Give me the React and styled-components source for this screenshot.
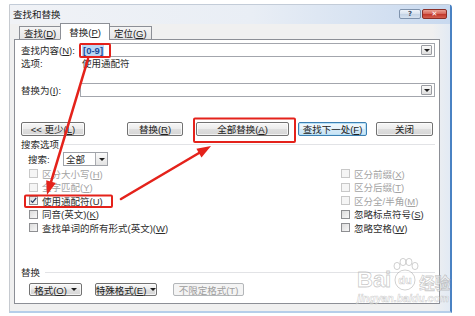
import React from 'react';
import styled, { createGlobalStyle, css } from 'styled-components';

const Global = createGlobalStyle`
  html, body { margin: 0; padding: 0; background: #fff; }
  body { font-family: "Liberation Sans", "Noto Sans CJK SC", sans-serif; font-size: 9.5px; color: #2a2a2a; }
  #root { width: 475px; height: 316px; overflow: hidden; }
  * { box-sizing: border-box; }
`;

const Page = styled.div`
  position: relative;
  display: flex;
  align-items: flex-start;
  width: 475px;
  height: 316px;
  padding-left: 9px;
`;

const Window = styled.div`
  margin-top: 4px;
  width: 443px;
  height: 309px;
  display: flex;
  flex-direction: column;
  border-left: 1px solid #c6cad0;
  border-top: 1px solid #c3ccd8;
  border-right: 2px solid #4a82c3;
  border-bottom: 2px solid #b6cee9;
  border-top-right-radius: 4px;
  background: linear-gradient(to right, #f0f0f0 0%, #f0f0f0 96%, #e2eaf4 100%);
`;

const TitleBar = styled.div`
  height: 19px;
  display: flex;
  align-items: flex-start;
  justify-content: space-between;
  padding: 0 3px 0 3px;
  background: linear-gradient(to right, rgba(240,242,246,1) 0%, rgba(233,238,245,1) 55%, rgba(200,217,239,1) 100%);
`;

const Title = styled.div`
  line-height: 19px;
  font-size: 9.5px;
  color: #1b1b1b;
`;

const Caption = styled.div`
  display: flex;
  gap: 1px;
  padding-top: 4px;
`;

const CapBtn = styled.div`
  height: 10px;
  width: ${p => p.$w}px;
  border-radius: 2px;
  display: flex;
  align-items: center;
  justify-content: center;
  font-size: 7px;
  line-height: 1;
  font-family: "DejaVu Sans", sans-serif;
  font-weight: bold;
  ${p => p.$close ? css`
    border: 1px solid #8a2e26;
    background: linear-gradient(#e9a093 0%, #d8685b 45%, #c2392c 55%, #d4604f 100%);
    color: #fff;
  ` : css`
    border: 1px solid #7f93ad;
    background: linear-gradient(#eef3f9 0%, #d9e3ef 45%, #c4d3e5 55%, #d6e1ee 100%);
    color: #3d4f68;
  `}
`;

const Body = styled.div`
  flex: 1;
  display: flex;
  flex-direction: column;
  padding: 0 10px 6px 4px;
`;

const Tabs = styled.div`
  height: 16px;
  display: flex;
  align-items: flex-end;
  padding-left: 5px;
  position: relative;
  z-index: 1;
  margin-bottom: -1px;
`;

const Tab = styled.div`
  display: flex;
  align-items: center;
  justify-content: center;
  border: 1px solid #8c8f96;
  font-size: 9.5px;
  color: #222;
  ${p => p.$active ? css`
    height: 17px;
    padding: 0 8px;
    background: #fff;
    border-bottom-color: #fff;
    margin: 0 -1px;
  ` : css`
    height: 14px;
    padding: 0 4px;
    background: linear-gradient(#f5f5f5, #e4e4e4);
  `}
`;

const Panel = styled.div`
  height: 265px;
  display: flex;
  flex-direction: column;
  border: 1px solid #8c8f96;
  background: #fff;
  padding: 3px 4px 7px 6px;
`;

const FieldRow = styled.div`
  display: flex;
  align-items: center;
  height: 14px;
  margin-top: ${p => p.$mt || 0}px;
`;

const Label = styled.div`
  width: ${p => p.$w || 59}px;
  flex: none;
  white-space: nowrap;
  color: #2a2a2a;
`;

const Key = styled.span`
  text-decoration: underline;
`;

const Combo = styled.div`
  flex: 1;
  height: 14px;
  display: flex;
  align-items: center;
  border: 1px solid #a3a6ad;
  background: #fff;
  padding: 0 2px 0 1px;
`;

const ComboText = styled.div`
  flex: 1;
  display: flex;
  align-items: center;
`;

const Sel = styled.span`
  background: #bcd8f4;
  color: #1b4c9c;
  font-weight: bold;
  padding: 0 1px;
  line-height: 11px;
`;

const DropBtn = styled.div`
  width: 11px;
  height: 10px;
  border: 1px solid #9a9ca2;
  border-radius: 1px;
  background: linear-gradient(#fafafa, #dedede);
  display: flex;
  align-items: center;
  justify-content: center;
`;

const Tri = styled.span`
  flex: none;
  width: 0;
  height: 0;
  border-left: 3px solid transparent;
  border-right: 3px solid transparent;
  border-top: 3px solid #1e1e1e;
`;

const OptRow = styled.div`
  display: flex;
  align-items: center;
  height: 12px;
`;

const OptValue = styled.span`
  padding-left: 2px;
  color: #2a2a2a;
`;

const ButtonRow = styled.div`
  display: flex;
  align-items: center;
  margin-top: ${p => p.$mt || 0}px;
  padding-left: ${p => p.$pl || 0}px;
`;

const Button = styled.div`
  width: ${p => p.$w}px;
  height: ${p => p.$h || 14}px;
  margin-left: ${p => p.$ml || 0}px;
  flex: none;
  display: flex;
  align-items: center;
  justify-content: center;
  gap: 4px;
  border-radius: 2px;
  font-size: 9.5px;
  white-space: nowrap;
  color: #222;
  border: 1px solid #727272;
  background: linear-gradient(#f7f7f7 0%, #ececec 48%, #dedede 52%, #d6d6d6 100%);
  box-shadow: inset 0 0 0 1px rgba(255,255,255,0.7);
  ${p => p.$default && css`
    border-color: #3c7fb1;
    box-shadow: inset 0 0 0 1px #b8e1f8;
    background: linear-gradient(#f2f9fd 0%, #e6f3fb 48%, #d2e9f7 52%, #c9e3f4 100%);
  `}
  ${p => p.$disabled && css`
    border-color: #b3b6b9;
    background: #f4f4f4;
    color: #9d9d9d;
    box-shadow: none;
  `}
`;

const BtnText = styled.span`
  white-space: nowrap;
`;

const SectionHead = styled.div`
  display: flex;
  align-items: center;
  gap: 5px;
  height: 10px;
  margin-top: ${p => p.$mt || 0}px;
  color: #2a2a2a;
`;

const Line = styled.div`
  flex: 1;
  height: 1px;
  background: #e2e3e6;
`;

const SearchRow = styled.div`
  display: flex;
  align-items: center;
  height: 14px;
  margin-top: 3px;
  padding-left: 7px;
`;

const Select = styled.div`
  width: 45px;
  height: 14px;
  display: flex;
  align-items: center;
  border: 1px solid #9fa2a8;
  padding-left: 2px;
  background: #fff;
`;

const SelectText = styled.div`
  flex: 1;
`;

const SelectBtn = styled.div`
  width: 12px;
  height: 12px;
  border-left: 1px solid #a9abb0;
  background: linear-gradient(#fbfbfb, #e3e3e3);
  display: flex;
  align-items: center;
  justify-content: center;
`;

const CheckGrid = styled.div`
  display: grid;
  grid-template-columns: 312px 1fr;
  grid-auto-rows: 13.5px;
  margin-top: 1px;
  padding-left: 8px;
`;

const CheckItem = styled.div`
  display: flex;
  align-items: center;
  white-space: nowrap;
  color: ${p => p.$disabled ? '#a3a3a3' : '#2e2e2e'};
`;

const Box = styled.span`
  width: 9px;
  height: 9px;
  flex: none;
  margin-right: 4px;
  display: flex;
  align-items: center;
  justify-content: center;
  border: 1px solid ${p => p.$disabled ? '#c8c8c8' : '#8e8f92'};
  background: ${p => p.$disabled ? '#f5f5f5' : 'linear-gradient(135deg, #dcdcdc, #f7f7f7)'};
`;

const Spacer = styled.div`
  flex: 1;
`;

const Overlay = styled.svg`
  position: absolute;
  left: 0;
  top: 0;
  pointer-events: none;
`;

const Watermark = styled.div`
  position: absolute;
  left: 357px;
  top: 257px;
  display: flex;
  flex-direction: column;
  align-items: flex-start;
  pointer-events: none;
`;

const WmTop = styled.div`
  display: flex;
  align-items: flex-end;
  height: 34px;
`;

const WmText = styled.span`
  font-family: "Liberation Sans", "Noto Sans CJK SC", sans-serif;
  font-weight: bold;
  font-size: ${p => p.$size}px;
  line-height: 1;
  color: rgba(255,255,255,0.5);
  -webkit-text-stroke: 0.8px rgba(140,140,140,0.45);
`;

const WmUrl = styled.span`
  font-family: "Liberation Sans", sans-serif;
  font-weight: bold;
  font-style: italic;
  font-size: 10.5px;
  margin-top: 1px;
  color: rgba(255,255,255,0.5);
  -webkit-text-stroke: 0.6px rgba(140,140,140,0.4);
`;

const Check = ({ label, k, disabled, checked }) => (
  <CheckItem $disabled={disabled}>
    <Box $disabled={disabled}>
      {checked && (
        <svg width="7" height="7" viewBox="0 0 7 7">
          <path d="M0.8 3.6 L2.6 5.4 L6.2 1" fill="none" stroke="#2b3f66" strokeWidth="1.2" />
        </svg>
      )}
    </Box>
    <span>{label}(<Key>{k}</Key>)</span>
  </CheckItem>
);

const Btn = ({ children, arrow, ...rest }) => (
  <Button {...rest}>
    <BtnText>{children}</BtnText>
    {arrow && <Tri />}
  </Button>
);

export default function App() {
  return (
    <>
      <Global />
      <Page>
        <Window>
          <TitleBar>
            <Title>查找和替换</Title>
            <Caption>
              <CapBtn $w={22}>?</CapBtn>
              <CapBtn $w={25} $close>✕</CapBtn>
            </Caption>
          </TitleBar>
          <Body>
            <Tabs>
              <Tab><span>查找(<Key>D</Key>)</span></Tab>
              <Tab $active><span>替换(<Key>P</Key>)</span></Tab>
              <Tab><span>定位(<Key>G</Key>)</span></Tab>
            </Tabs>
            <Panel>
              <FieldRow>
                <Label>查找内容(<Key>N</Key>):</Label>
                <Combo>
                  <ComboText><Sel>[0-9]</Sel></ComboText>
                  <DropBtn><Tri /></DropBtn>
                </Combo>
              </FieldRow>
              <OptRow>
                <Label>选项:</Label>
                <OptValue>使用通配符</OptValue>
              </OptRow>
              <FieldRow $mt={14}>
                <Label>替换为(<Key>I</Key>):</Label>
                <Combo>
                  <ComboText />
                  <DropBtn><Tri /></DropBtn>
                </Combo>
              </FieldRow>
              <ButtonRow $mt={25}>
                <Btn $w={64}>&lt;&lt; 更少(<Key>L</Key>)</Btn>
                <Btn $w={56} $ml={42}>替换(<Key>R</Key>)</Btn>
                <Btn $w={93} $ml={13}>全部替换(<Key>A</Key>)</Btn>
                <Btn $w={69} $ml={9} $default>查找下一处(<Key>F</Key>)</Btn>
                <Btn $w={57} $ml={9}>关闭</Btn>
              </ButtonRow>
              <SectionHead $mt={3}>搜索选项<Line /></SectionHead>
              <SearchRow>
                <Label $w={35}>搜索:</Label>
                <Select>
                  <SelectText>全部</SelectText>
                  <SelectBtn><Tri /></SelectBtn>
                </Select>
              </SearchRow>
              <CheckGrid>
                <Check label="区分大小写" k="H" disabled />
                <Check label="区分前缀" k="X" disabled />
                <Check label="全字匹配" k="Y" disabled />
                <Check label="区分后缀" k="T" disabled />
                <Check label="使用通配符" k="U" checked />
                <Check label="区分全/半角" k="M" disabled />
                <Check label="同音(英文)" k="K" />
                <Check label="忽略标点符号" k="S" />
                <Check label="查找单词的所有形式(英文)" k="W" />
                <Check label="忽略空格" k="W" />
              </CheckGrid>
              <Spacer />
              <SectionHead>替换<Line /></SectionHead>
              <ButtonRow $mt={6} $pl={8}>
                <Btn $w={53} $h={13} arrow>格式(<Key>O</Key>)</Btn>
                <Btn $w={62} $h={13} $ml={13} arrow>特殊格式(<Key>E</Key>)</Btn>
                <Btn $w={71} $h={13} $ml={16} $disabled>不限定格式(T)</Btn>
              </ButtonRow>
            </Panel>
          </Body>
        </Window>
        <Watermark>
          <WmTop>
            <WmText $size={22}>Bai</WmText>
            <svg width="28" height="33" viewBox="0 0 28 33">
              <g fill="rgba(255,255,255,0.5)" stroke="rgba(140,140,140,0.45)" strokeWidth="0.9">
                <ellipse cx="6" cy="8" rx="3" ry="3.6" />
                <ellipse cx="12" cy="4" rx="3" ry="3.6" />
                <ellipse cx="18" cy="4" rx="3" ry="3.6" />
                <ellipse cx="24" cy="8" rx="3" ry="3.6" />
                <circle cx="14" cy="22" r="10" />
              </g>
              <text x="14" y="26" textAnchor="middle" fontFamily="Liberation Sans, sans-serif" fontWeight="bold" fontSize="11" fill="rgba(255,255,255,0.6)" stroke="rgba(140,140,140,0.45)" strokeWidth="0.6">du</text>
            </svg>
            <WmText $size={15.5}>经验</WmText>
          </WmTop>
          <WmUrl>jingyan.baidu.com</WmUrl>
        </Watermark>
        <Overlay width="475" height="316" viewBox="0 0 475 316">
          <g fill="none" stroke="#e4221b" strokeWidth="2">
            <rect x="80" y="44" width="30" height="13" rx="1" />
            <rect x="194" y="118.5" width="101" height="23.5" rx="1" />
            <rect x="25" y="195.5" width="87" height="11.5" rx="1" />
          </g>
          <g stroke="#e4221b" strokeWidth="2.6" strokeLinecap="round">
            <line x1="88" y1="59" x2="51" y2="182" />
            <line x1="121" y1="199" x2="199" y2="153" />
          </g>
          <g fill="#e4221b">
            <polygon points="47,195 55.8,183 46.2,180.2" />
            <polygon points="211,146 201.5,157.4 196.4,148.8" />
          </g>
        </Overlay>
      </Page>
    </>
  );
}
